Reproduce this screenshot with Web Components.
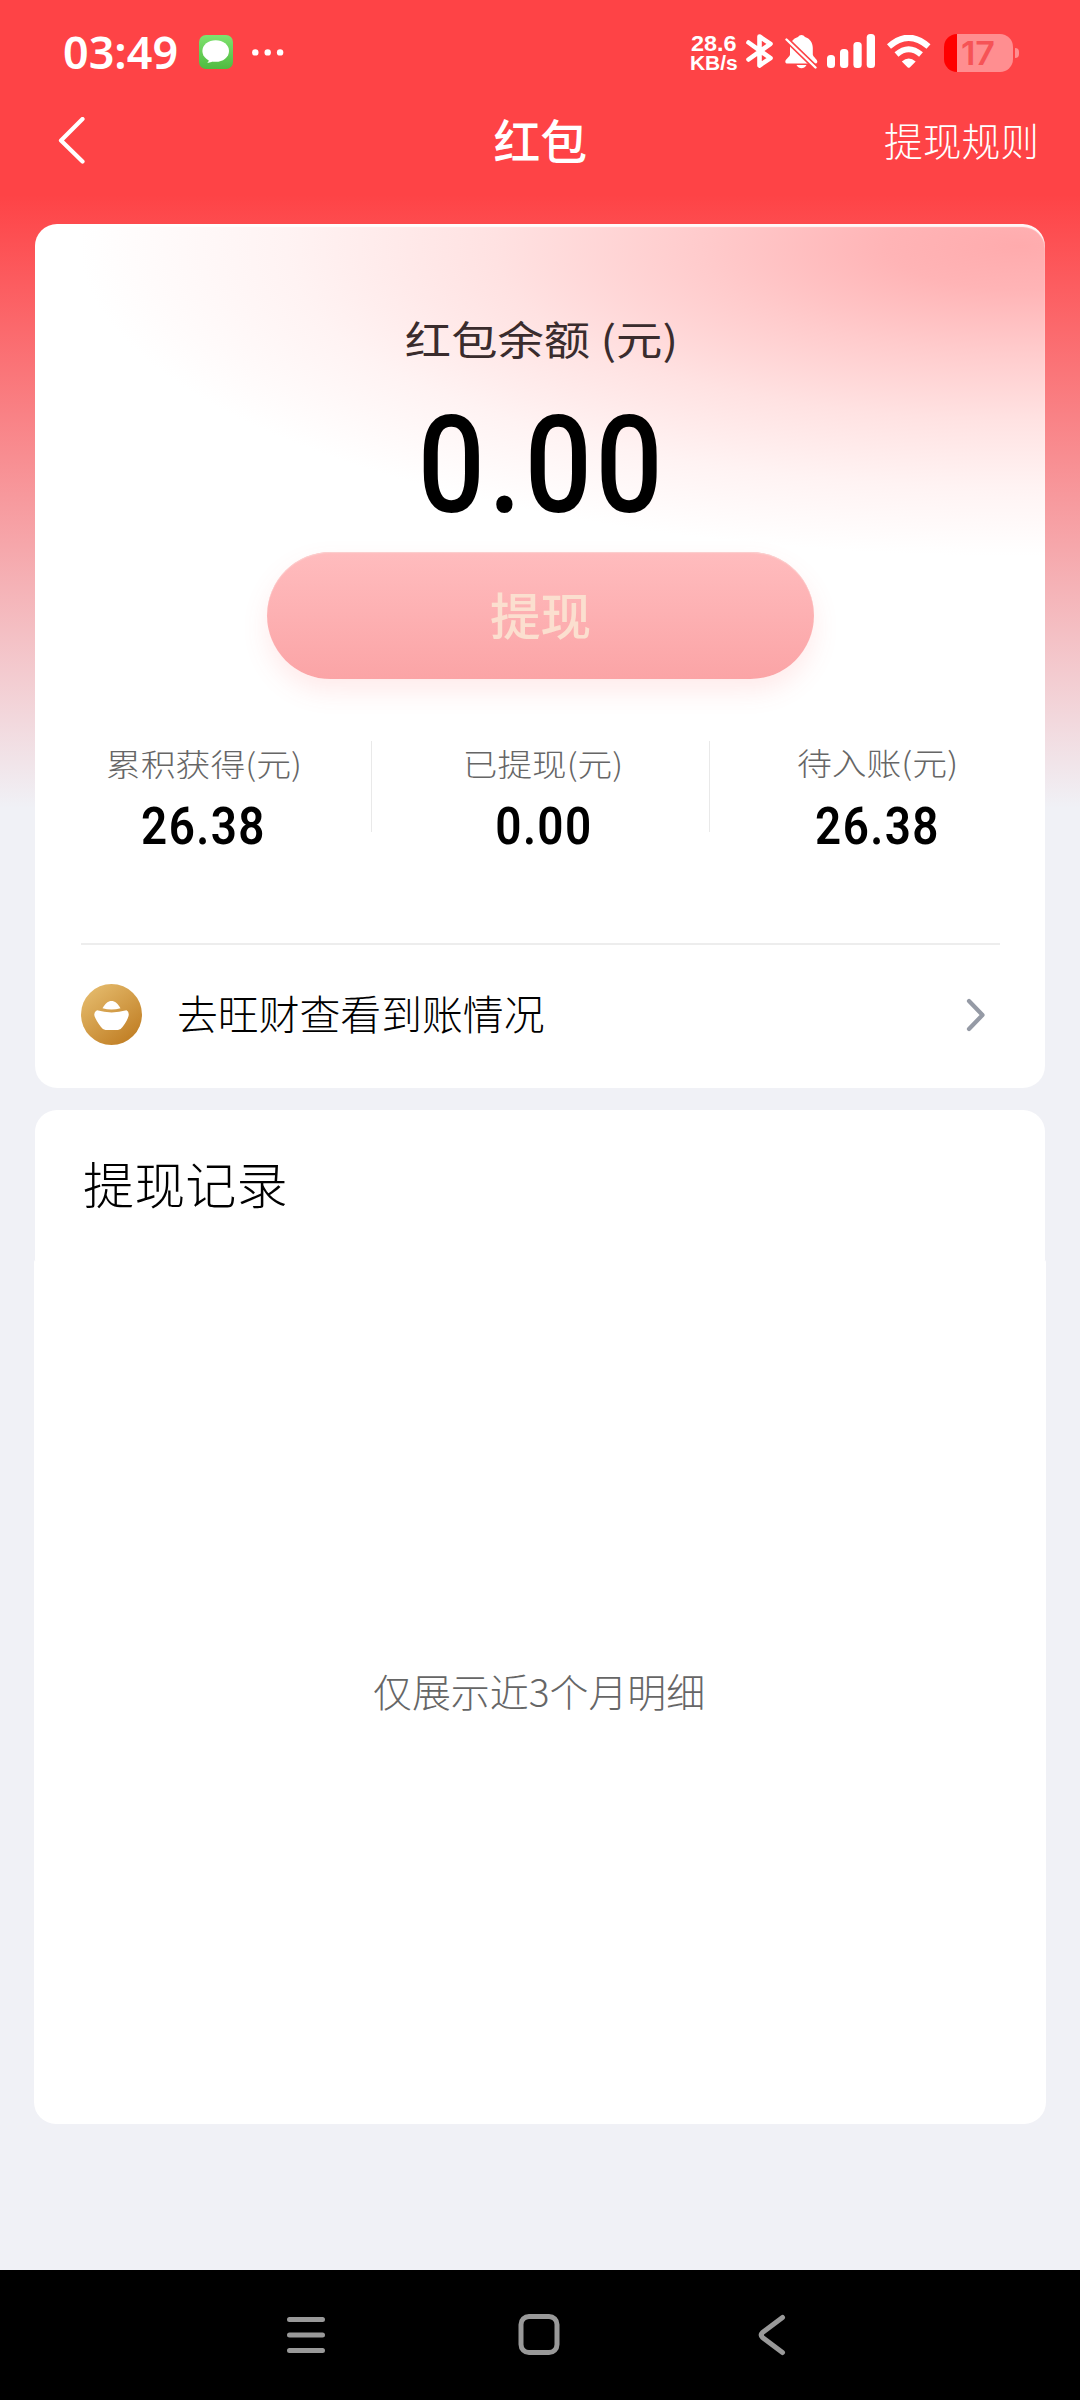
<!DOCTYPE html>
<html lang="zh-CN">
<head>
<meta charset="utf-8">
<title>红包</title>
<style>
html,body{margin:0;padding:0}
body{width:1080px;height:2400px;overflow:hidden;background:#f0f1f6;font-family:"Noto Sans CJK SC",sans-serif}
</style>
</head>
<body>
<wallet-screen></wallet-screen>
<script>
const CJK = '"Noto Sans CJK SC", sans-serif';
const define = (name, css, html) => customElements.define(name, class extends HTMLElement {
  constructor() {
    super();
    this.attachShadow({mode: 'open'}).innerHTML = `<style>:host{display:block;box-sizing:border-box}svg{display:block}${css}</style>${html}`;
  }
});

/* A one-line label whose box is exactly the ink box of its text: w x h pixels. */
customElements.define('fit-text', class extends HTMLElement {
  connectedCallback() {
    const w = +this.getAttribute('w'), h = +this.getAttribute('h');
    const weight = this.getAttribute('weight') || 400;
    const family = this.getAttribute('family') || CJK;
    const spacing = +(this.getAttribute('spacing') || 0);
    const text = this.getAttribute('text');
    const ctx = document.createElement('canvas').getContext('2d');
    ctx.font = `${weight} 200px ${family}`;
    let m = ctx.measureText(text);
    const size = 200 * h / (m.actualBoundingBoxAscent + m.actualBoundingBoxDescent);
    ctx.font = `${weight} ${size}px ${family}`;
    ctx.letterSpacing = spacing + 'px';
    m = ctx.measureText(text);
    const sx = w / (m.actualBoundingBoxLeft + m.actualBoundingBoxRight);
    const base = h / 2 + (m.fontBoundingBoxAscent - m.fontBoundingBoxDescent) / 2;
    const root = this.shadowRoot || this.attachShadow({mode: 'open'});
    root.innerHTML = `<style>:host{display:block;flex:none;width:${w}px;height:${h}px}
      span{display:block;width:max-content;white-space:pre;font:${weight} ${size}px/${h}px ${family};letter-spacing:${spacing}px;
      transform-origin:0 0;transform:translate(${m.actualBoundingBoxLeft * sx}px,${m.actualBoundingBoxAscent - base}px) scaleX(${sx})}</style><span></span>`;
    root.querySelector('span').textContent = text;
  }
});

define('message-icon', ':host{width:34px;height:34px}', `
<svg width="34" height="34" viewBox="0 0 34 34"><defs><linearGradient id="g" x2="0" y2="1"><stop stop-color="#7fe26f"/><stop offset="1" stop-color="#4fbb40"/></linearGradient></defs>
<rect width="34" height="34" rx="7" fill="url(#g)"/><ellipse cx="16.7" cy="16" rx="13.3" ry="10.8" fill="#fff"/><path d="M10 23.5q.3 3-1.700 4.600q4.500-.2 7-3z" fill="#fff"/></svg>`);

define('bluetooth-icon', '', `
<svg width="28" height="34" viewBox="0 0 28 34"><path d="M2.500 8.500L24.500 24.200L13.500 31.500V2.500L24.500 9.800L2.500 25.500" fill="none" stroke="#fff" stroke-width="4.600" stroke-linecap="round" stroke-linejoin="round"/></svg>`);

define('muted-bell-icon', '', `
<svg width="34" height="36" viewBox="0 0 34 36"><path d="M16.500 0c-1.500 0-2.600.8-3.500 2C8 3.500 5 7.500 5 13v6.500c0 2-4.700 5-4.700 7 0 1.500.8 2 2 2h28c1.200 0 2-.5 2-2 0-2-4.500-5-4.500-7V13c0-5.500-3-9.500-7.800-11-.9-1.200-2-2-3.500-2zM11.500 30c1.300 2.300 3 3.300 5 3.300s3.700-1 5-3.300z" fill="#fff"/>
<path d="M1 4L31 33" stroke="#fd4346" stroke-width="5.400"/><path d="M1.500 4.500L30.500 32.500" stroke="#fff" stroke-width="2.400" stroke-linecap="round"/></svg>`);

define('signal-icon', '', `
<svg width="49" height="34" viewBox="0 0 49 34" fill="#fff"><rect y="21" width="8" height="13" rx="3.500"/><rect x="13" y="15" width="8.300" height="19" rx="3.500"/><rect x="26.400" y="8" width="8.300" height="26" rx="3.500"/><rect x="39.700" width="8.300" height="34" rx="3.500"/></svg>`);

define('wifi-icon', '', `
<svg width="46" height="34" viewBox="0 0 46 34"><path d="M3 11.500Q22.500 -6 42.500 11.500" fill="none" stroke="#fff" stroke-width="6"/><path d="M10.500 19.500Q22.500 9 35 19.500" fill="none" stroke="#fff" stroke-width="6"/><path d="M15.800 26.500Q22.700 20.500 29.700 26.500L24 32.200Q22.700 33.400 21.500 32.200z" fill="#fff"/></svg>`);

define('battery-icon', `
:host{display:flex;align-items:center;gap:2px}
.body{box-sizing:border-box;width:69px;height:38px;border-radius:13px;padding:7px 0 0 18px;background:linear-gradient(90deg,#f00 12.500px,#ff8e90 12.500px)}
.nub{width:4px;height:10px;border-radius:0 5px 5px 0;background:#ff8e90}
fit-text{color:#f65356}`,
`<div class="body"><fit-text text="17" w="32" h="24" weight="600" family="Inter, sans-serif"></fit-text></div><div class="nub"></div>`);

define('status-bar', `
:host{display:flex;align-items:flex-start;height:104px;padding:34px 61px 0 64px;color:#fff}
.time{margin-top:2px}
message-icon{margin:1px 0 0 22px}
.dots{margin:14.700px 0 0 18.500px}
.net{margin-left:auto;padding-top:2px;display:flex;flex-direction:column;gap:4px}
bluetooth-icon{margin-left:9px}muted-bell-icon{margin:1px 0 0 11px}signal-icon{margin-left:8px}wifi-icon{margin:1px 0 0 10px}battery-icon{margin-left:12px}`,
`<fit-text class="time" text="03:49" w="113" h="34" weight="560" family='"Noto Sans", sans-serif'></fit-text>
<message-icon></message-icon>
<svg class="dots" width="32" height="7" fill="#fff"><circle cx="3.300" cy="3.400" r="3.200"/><circle cx="15.700" cy="3.400" r="3.200"/><circle cx="28.100" cy="3.400" r="3.200"/></svg>
<div class="net"><fit-text text="28.6" w="45" h="16" weight="700" family='"Liberation Sans", sans-serif'></fit-text><fit-text text="KB/s" w="46" h="14.500" weight="700" family='"Liberation Sans", sans-serif'></fit-text></div>
<bluetooth-icon></bluetooth-icon><muted-bell-icon></muted-bell-icon><signal-icon></signal-icon><wifi-icon></wifi-icon><battery-icon></battery-icon>`);

define('title-bar', `
:host{display:grid;grid-template-columns:1fr auto 1fr;align-items:start;height:120px;padding:13px 44px 0 57px;color:#fff}
.title{margin:2px 0 0 0;transform:translateX(-6.500px)}
.rule{margin-top:6px;justify-self:end}`,
`<svg width="30" height="48" viewBox="0 0 30 48"><path d="M25.500 2L4 23.500L25.500 44.500" fill="none" stroke="#fff" stroke-width="4.200" stroke-linecap="round" stroke-linejoin="round"/></svg>
<fit-text class="title" text="红包" w="92" h="43" weight="500"></fit-text>
<fit-text class="rule" text="提现规则" w="151" h="36" weight="300"></fit-text>`);

define('withdraw-button', `
:host{display:flex;align-items:flex-start;justify-content:center;width:547px;height:127px;padding-top:40px;border-radius:64px;background:linear-gradient(#ffbcbe,#fba4a6);box-shadow:0 12px 26px rgba(255,90,90,.13),inset 0 1px 1px #fbd0cf;color:#fbdfcf}`,
`<fit-text text="提现" w="98.500" h="47" weight="500"></fit-text>`);

customElements.define('stat-item', class extends HTMLElement {
  connectedCallback() {
    const a = n => this.getAttribute(n);
    this.attachShadow({mode: 'open'}).innerHTML = `<style>
      :host{display:flex;flex-direction:column;align-items:center;box-sizing:border-box;height:91px;padding-top:7.500px;gap:25px}
      .k{color:#666}.v{color:#000}</style>
      <fit-text class="k" text="${a('label')}" w="${a('lw')}" h="32" weight="300"></fit-text>
      <fit-text class="v" text="${a('value')}" w="${a('vw')}" h="38" weight="600" spacing="1.600" family="Roboto, sans-serif"></fit-text>`;
  }
});

define('ingot-icon', ':host{width:61px;height:61px}', `
<svg width="61" height="61" viewBox="0 0 61 61"><defs><linearGradient id="g" x1=".15" y1=".1" x2=".8" y2=".95"><stop stop-color="#e3b869"/><stop offset="1" stop-color="#c17f25"/></linearGradient></defs>
<circle cx="30.500" cy="30.500" r="30.500" fill="url(#g)"/><path d="M21.500 24.300C24.500 19 27 17 30.500 17s6 2 9 7.300Q30.500 26.800 21.500 24.300z" fill="#fff"/><path d="M16 26.300Q30.500 30.500 45.500 26.300Q48.500 28 47.500 32Q46.500 36.500 41.500 43Q39.500 46 37 46H24.500Q22 46 20 43Q15 36.500 13.500 32Q12.500 28 16 26.300z" fill="#fff"/></svg>`);

define('account-link', `
:host{display:flex;align-items:flex-start;border-top:2px solid #ededed;padding:38.500px 14px 0 0;height:144px;color:#000}
fit-text{margin:11.500px 0 0 37px}
.arrow{margin:14px 0 0 auto}`,
`<ingot-icon></ingot-icon><fit-text text="去旺财查看到账情况" w="364" h="37.500" weight="300"></fit-text>
<svg class="arrow" width="20" height="34" viewBox="0 0 20 34"><path d="M3 3L16.500 17L3 31" fill="none" stroke="#959aa5" stroke-width="4.200" stroke-linecap="round" stroke-linejoin="round"/></svg>`);

define('balance-card', `
:host{display:flex;flex-direction:column;align-items:center;width:1010px;height:864px;margin:0 35px;padding:96px 46px 0;border-radius:22px;box-shadow:inset 0 3px 1px #ffffffe0;
background:radial-gradient(ellipse 940px 310px at 985px 22px,#ffabad 0,#ffb4b6 14%,#ffcbcc 34%,#ffe2e2 56%,#fff3f3 78%,#fff 100%) #fff}
.label{color:#3a2c2d}
.amount{margin:52px 0 39px;color:#000}
withdraw-button{flex:none}
.stats{display:grid;grid-template-columns:336px 1px 337px 1px 335px;width:1010px;margin-top:62px}
.stats i{background:#e9e9e9}
.stats .first{padding-right:1px}
.stats .mid{padding-left:4px}
.stats .last{padding-right:2px}
account-link{width:919px;margin-top:111px}`,
`<fit-text class="label" text="红包余额 (元)" w="268" h="42" weight="400"></fit-text>
<fit-text class="amount" text="0.00" w="234" h="99" weight="500" spacing="4" family="Roboto, sans-serif"></fit-text>
<withdraw-button></withdraw-button>
<div class="stats"><stat-item class="first" label="累积获得(元)" lw="192" value="26.38" vw="121"></stat-item><i></i>
<stat-item class="mid" label="已提现(元)" lw="155" value="0.00" vw="92"></stat-item><i></i>
<stat-item class="last" label="待入账(元)" lw="157" value="26.38" vw="121"></stat-item></div>
<account-link></account-link>`);

define('record-card', `
:host{width:1012px;margin:22px 34px 0}
.head{box-sizing:border-box;width:1010px;height:150px;margin:0 1px;padding:52px 0 0 49px;background:#fff;border-radius:22px 22px 0 0;color:#000}
.list{box-sizing:border-box;height:864px;padding:414px 0 0 340px;background:#fff;border-radius:2px 2px 22px 22px;color:#666}`,
`<div class="head"><fit-text text="提现记录" w="202" h="46.500" weight="300"></fit-text></div>
<div class="list"><fit-text text="仅展示近3个月明细" w="329" h="35.500" weight="300"></fit-text></div>`);

define('nav-bar', `
:host{display:flex;align-items:flex-start;height:130px;margin-top:146px;padding:43px 0 0 286px;background:#000}
svg{fill:none;stroke:#999;stroke-width:5;stroke-linecap:round;stroke-linejoin:round}
svg+svg{margin-left:190px}svg:last-child{margin-left:196px}`,
`<svg width="40" height="44"><path d="M3.500 6.500h33M3.500 22h33M3.500 37.500h33"/></svg>
<svg width="44" height="44"><rect x="5" y="3.500" width="36" height="36" rx="8"/></svg>
<svg width="32" height="44"><path d="M26.500 4.500L6.500 19.500Q4 22 6.500 24.500L26.500 39.500"/></svg>`);

define('wallet-screen', `
:host{display:flex;flex-direction:column;width:1080px;height:2400px;background:linear-gradient(#fe4346 0,#fe4346 195px,#f0f1f6 808px) #f0f1f6}
status-bar,title-bar,balance-card,record-card,nav-bar{flex:none}`,
`<status-bar></status-bar><title-bar></title-bar><balance-card></balance-card><record-card></record-card><nav-bar></nav-bar>`);
</script>
</body>
</html>
